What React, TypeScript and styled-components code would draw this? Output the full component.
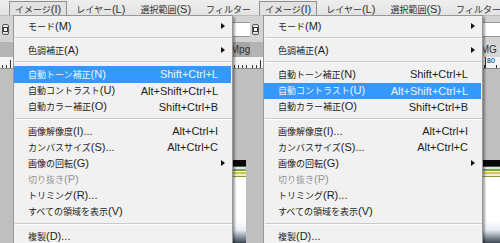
import React from 'react';
import styled, { createGlobalStyle } from 'styled-components';

const GlobalStyle = createGlobalStyle`
  html, body {
    margin: 0;
    padding: 0;
    background: #c0c0c0;
  }
`;

const CJK = /([\u3000-\u30ff\u4e00-\u9fff\uff00-\uffef]+)/;

const Jp = styled.span`
  font-family: "Noto Sans CJK JP", sans-serif;
  font-size: 9px;
`;

const Txt: React.FC<{ text: string }> = ({ text }) => (
  <>
    {text.split(CJK).map((part, i) =>
      i % 2 === 1 ? <Jp key={i}>{part}</Jp> : <React.Fragment key={i}>{part}</React.Fragment>
    )}
  </>
);

const Screen = styled.div`
  display: flex;
  width: 500px;
  height: 243px;
  overflow: hidden;
`;

const Panel = styled.div`
  position: relative;
  width: 250px;
  height: 243px;
  flex-shrink: 0;
  overflow: hidden;
  display: flex;
  flex-direction: column;
  font-family: "Liberation Sans", "Noto Sans CJK JP", sans-serif;
  font-size: 11px;
  color: #1e1e1e;
`;

const MenuBar = styled.div`
  display: flex;
  align-items: stretch;
  gap: 3px;
  height: 15px;
  background: linear-gradient(#eeeeee, #e3e3e3);
  color: #333;
  white-space: nowrap;
`;

const Tail = styled.div`
  width: 10px;
  padding-right: 6px;
  box-sizing: border-box;
  display: flex;
  justify-content: flex-end;
  overflow: hidden;
  line-height: 15px;
`;

const BarItem = styled.div<{ $open?: boolean }>`
  padding: 0 5px;
  line-height: 14px;
  box-sizing: border-box;
  border: 1px solid ${p => (p.$open ? '#8f8f8f' : 'transparent')};
  border-bottom: none;
  margin-top: 1px;
  background: ${p => (p.$open ? '#e2e2e2' : 'transparent')};
`;

const Toolbar = styled.div`
  display: flex;
  align-items: center;
  height: 27px;
  background: #d3d3d3;
  border-top: 1px solid #bcbcbc;
  box-sizing: border-box;
`;

const ToolButton = styled.div`
  width: 8px;
  height: 9px;
  margin-left: 2px;
  border: 1px solid #555;
  border-radius: 2px;
  background: #e6e6e6;
  display: flex;
  align-items: center;
  justify-content: center;
  &::after {
    content: '';
    width: 3px;
    height: 3px;
    border: 1px solid #333;
    background: #fff;
  }
`;

const Field = styled.div`
  margin-left: 222px;
  width: 40px;
  height: 13px;
  flex-shrink: 0;
  background: #fff;
  border: 1px solid #9a9a9a;
`;

const TabBar = styled.div`
  display: flex;
  align-items: stretch;
  height: 15px;
  background: #b4b4b4;
  white-space: nowrap;
  font-size: 10px;
  color: #333;
`;

const TabTail = styled.div`
  width: 8px;
  display: flex;
  justify-content: flex-end;
  overflow: hidden;
  background: #a9a9a9;
  line-height: 15px;
`;

const DocTab = styled.div<{ $light?: boolean }>`
  margin-left: 224px;
  padding-left: 3px;
  width: 60px;
  flex-shrink: 0;
  line-height: 15px;
  background: ${p => (p.$light ? '#d6d6d6' : '#a6a6a6')};
  border-left: 1px solid #8a8a8a;
`;

const Ruler = styled.div`
  display: flex;
  height: 11px;
  background-color: #f4f4f4;
  background-image:
    repeating-linear-gradient(to right, #333 0 1px, transparent 1px 4px),
    repeating-linear-gradient(to right, #333 0 1px, transparent 1px 20px);
  background-size: 100% 3px, 100% 8px;
  background-position: 2px 100%, 10px 100%;
  background-repeat: no-repeat;
  border-bottom: 1px solid #8c8c8c;
  font-size: 7px;
  line-height: 8px;
  color: #222;
`;

const RulerMark = styled.span`
  margin-left: 235px;
  padding: 0 1px;
  background: #f4f4f4;
  border-left: 1px solid #333;
`;

const Canvas = styled.div`
  flex: 1;
  display: flex;
  flex-direction: column;
  justify-content: flex-end;
  background: #bfbfbf;
`;

const Picture = styled.div<{ $w: number }>`
  margin-left: 232px;
  width: ${p => p.$w}px;
  height: 83px;
  border-left: 1px solid #8ea6c4;
  background: linear-gradient(
    #0a0a0a 0 6px,
    #4a5a4a 6px 7px,
    #dfe7df 7px 9px,
    #77a84a 9px 11px,
    #f2f2e8 11px 12px,
    #d4cc3a 12px 14px,
    #e9eddc 14px 16px,
    #8e9a3a 16px 17px,
    #ffffff 17px 60px,
    #e8eef4 70px,
    #7a8792 78px,
    #3b4650 83px
  );
`;

const Menu = styled.div`
  position: absolute;
  left: 13px;
  top: 15px;
  width: 220px;
  height: 240px;
  box-sizing: border-box;
  padding-top: 2px;
  background: #f1f1f1;
  border: 1px solid #979797;
  box-shadow: 2px 2px 2px rgba(0, 0, 0, 0.35);
  white-space: nowrap;
`;

const Row = styled.div<{ $active?: boolean; $disabled?: boolean }>`
  display: grid;
  grid-template-columns: 1fr auto 13px;
  align-items: center;
  height: 16.2px;
  padding-left: 14px;
  margin: 0 1px 0 0;
  background: ${p => (p.$active ? '#3399ff' : 'transparent')};
  color: ${p => (p.$active ? '#eef4ff' : p.$disabled ? '#959595' : '#1e1e1e')};
`;

const Shortcut = styled.span`
  text-align: right;
`;

const Arrow = styled.span`
  width: 0;
  height: 0;
  margin-left: 3px;
  border-left: 4px solid #111;
  border-top: 3px solid transparent;
  border-bottom: 3px solid transparent;
`;

const Separator = styled.div`
  height: 8px;
  display: flex;
  align-items: center;
  &::after {
    content: '';
    flex: 1;
    margin-left: 1px;
    height: 0;
    border-top: 1px solid #c9c9c9;
    border-bottom: 1px solid #fdfdfd;
  }
`;

type Entry = { label?: string; shortcut?: string; arrow?: boolean; disabled?: boolean; sep?: boolean };

const entries: Entry[] = [
  { label: 'モード(M)', arrow: true },
  { sep: true },
  { label: '色調補正(A)', arrow: true },
  { sep: true },
  { label: '自動トーン補正(N)', shortcut: 'Shift+Ctrl+L' },
  { label: '自動コントラスト(U)', shortcut: 'Alt+Shift+Ctrl+L' },
  { label: '自動カラー補正(O)', shortcut: 'Shift+Ctrl+B' },
  { sep: true },
  { label: '画像解像度(I)...', shortcut: 'Alt+Ctrl+I' },
  { label: 'カンバスサイズ(S)...', shortcut: 'Alt+Ctrl+C' },
  { label: '画像の回転(G)', arrow: true },
  { label: '切り抜き(P)', disabled: true },
  { label: 'トリミング(R)...' },
  { label: 'すべての領域を表示(V)' },
  { sep: true },
  { label: '複製(D)...' },
];

const menuBar = ['イメージ(I)', 'レイヤー(L)', '選択範囲(S)', 'フィルター(T)'];

interface ShotProps {
  active: string;
  tab: string;
  lightTab?: boolean;
  mark?: string;
  pictureWidth: number;
}

const Shot: React.FC<ShotProps> = ({ active, tab, lightTab, mark, pictureWidth }) => (
  <Panel>
    <MenuBar>
      <Tail><Txt text="編集(E)" /></Tail>
      {menuBar.map((m, i) => (
        <BarItem key={m} $open={i === 0}><Txt text={m} /></BarItem>
      ))}
    </MenuBar>
    <Toolbar>
      <ToolButton />
      <Field />
    </Toolbar>
    <TabBar>
      <TabTail>.jpg</TabTail>
      <DocTab $light={lightTab}>{tab}</DocTab>
    </TabBar>
    <Ruler>{mark && <RulerMark>{mark}</RulerMark>}</Ruler>
    <Canvas>
      <Picture $w={pictureWidth} />
    </Canvas>
    <Menu>
      {entries.map((e, i) =>
        e.sep ? (
          <Separator key={i} />
        ) : (
          <Row key={i} $active={e.label === active} $disabled={e.disabled}>
            <span><Txt text={e.label!} /></span>
            <Shortcut>{e.shortcut}</Shortcut>
            {e.arrow ? <Arrow /> : <span />}
          </Row>
        )
      )}
    </Menu>
  </Panel>
);

export default function App() {
  return (
    <>
      <GlobalStyle />
      <Screen>
        <Shot active="自動トーン補正(N)" tab="IMpg" pictureWidth={13} />
        <Shot active="自動コントラスト(U)" tab="IMG" lightTab mark="80" pictureWidth={30} />
      </Screen>
    </>
  );
}
